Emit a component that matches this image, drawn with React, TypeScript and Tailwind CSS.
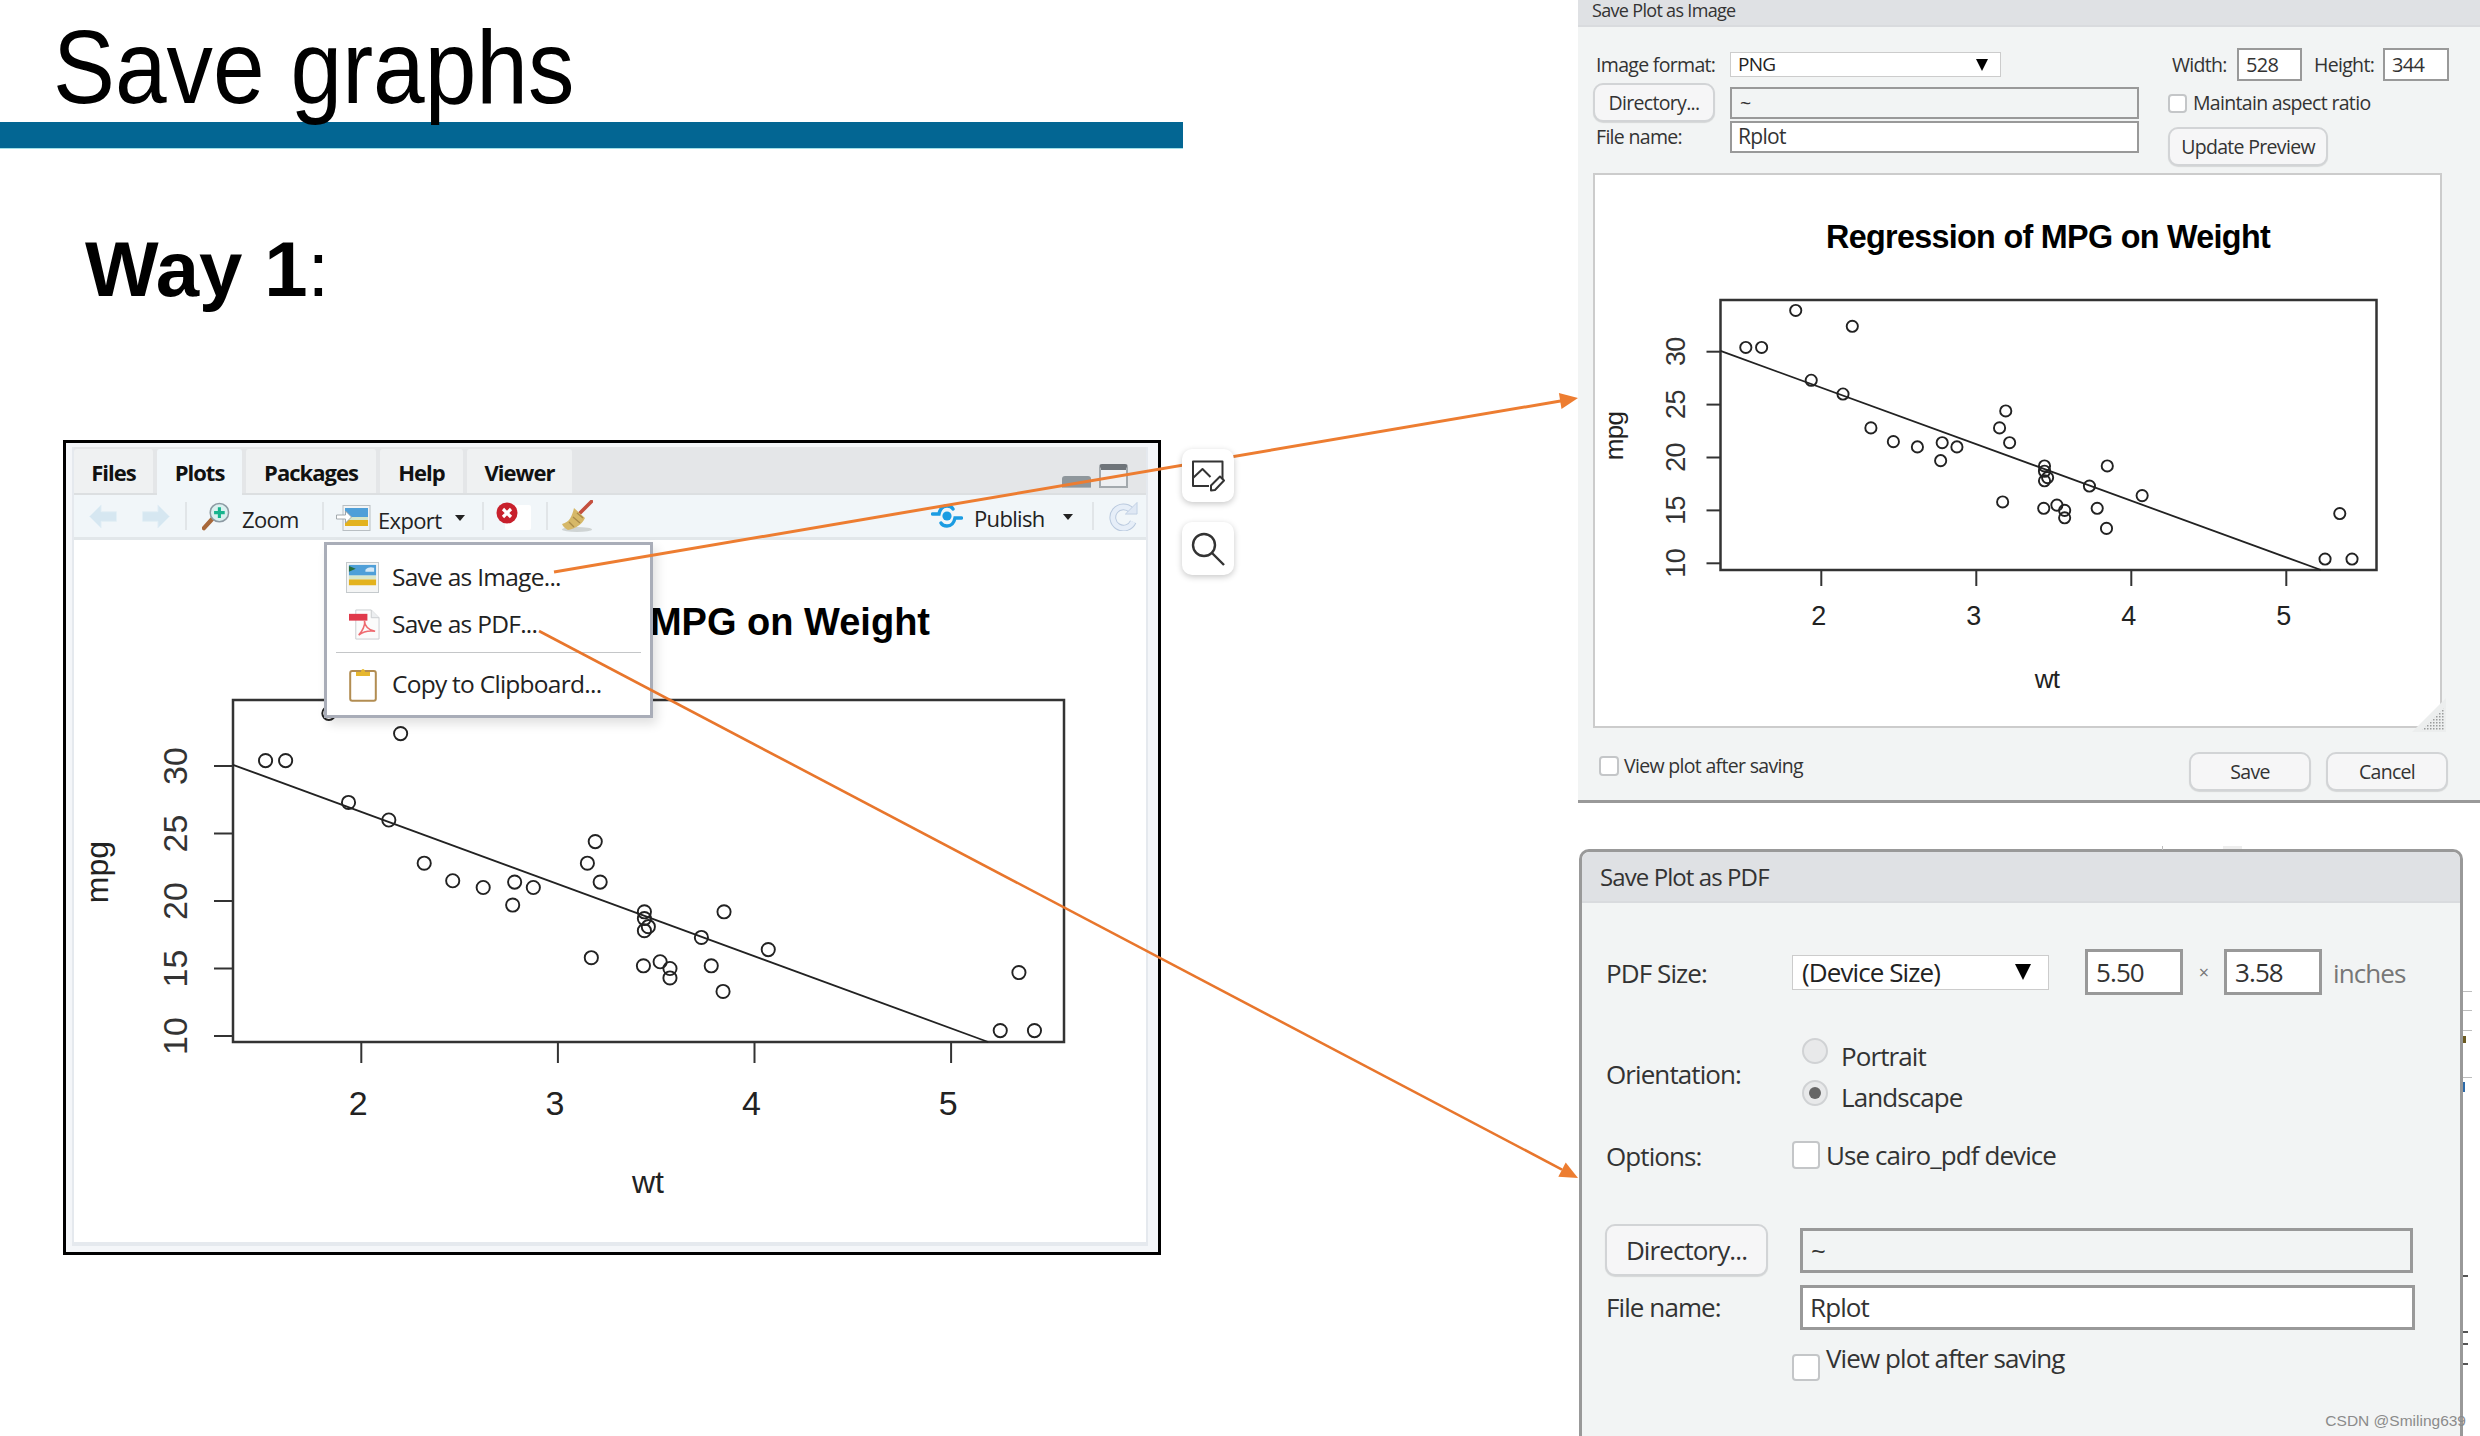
const points = [
  [2.62, 21], [2.875, 21], [2.32, 22.8], [3.215, 21.4], [3.44, 18.7], [3.46, 18.1], [3.57, 14.3], [3.19, 24.4],
  [3.15, 22.8], [3.44, 19.2], [3.44, 17.8], [4.07, 16.4], [3.73, 17.3], [3.78, 15.2], [5.25, 10.4], [5.424, 10.4],
  [5.345, 14.7], [2.2, 32.4], [1.615, 30.4], [1.835, 33.9], [2.465, 21.5], [3.52, 15.5], [3.435, 15.2], [3.84, 13.3],
  [3.845, 19.2], [1.935, 27.3], [2.14, 26], [1.513, 30.4], [3.17, 15.8], [2.77, 19.7], [3.57, 15], [2.78, 21.4],
];

type PlotProps = {
  viewBox: string;
  box: { l: number; r: number; t: number; b: number };
  x2: number;
  xUnit: number;
  y10: number;
  yUnit: number;
  tickLen: number;
  r: number;
  title: string;
  titleSize: number;
  titleEnd: number;
  titleY: number;
  tickSize: number;
  yLabelX: number;
  xLabelY: number;
  mpgX: number;
  mpgY: number;
  mpgSize: number;
  wtX: number;
  wtY: number;
  wtSize: number;
};

function Plot(p: PlotProps) {
  const xAt = (wt: number) => p.x2 + (wt - 2) * p.xUnit;
  const yAt = (mpg: number) => p.y10 - (mpg - 10) * p.yUnit;
  const fit = (wt: number) => 37.285 - 5.344 * wt;
  const wtLeft = 2 + (p.box.l - p.x2) / p.xUnit;
  const mpgBottom = 10 - (p.box.b - p.y10) / p.yUnit;
  const wtBottom = (37.285 - mpgBottom) / 5.344;

  return (
    <svg viewBox={p.viewBox} className="block w-full h-full font-['Liberation_Sans',sans-serif]">
      <text x={p.titleEnd} y={p.titleY} textAnchor="end" fontSize={p.titleSize} fontWeight="700" fill="#000">
        {p.title}
      </text>
      <rect x={p.box.l} y={p.box.t} width={p.box.r - p.box.l} height={p.box.b - p.box.t} fill="none" stroke="#333" strokeWidth="2.5" />
      <line x1={p.box.l} y1={yAt(fit(wtLeft))} x2={xAt(wtBottom)} y2={p.box.b} stroke="#222" strokeWidth="1.8" />
      {points.map(([wt, mpg], i) => (
        <circle key={i} cx={xAt(wt)} cy={yAt(mpg)} r={p.r} fill="none" stroke="#222" strokeWidth="1.9" />
      ))}
      {[2, 3, 4, 5].map((v) => (
        <g key={v}>
          <line x1={xAt(v)} y1={p.box.b} x2={xAt(v)} y2={p.box.b + p.tickLen} stroke="#333" strokeWidth="2" />
          <text x={xAt(v) - 3} y={p.xLabelY} textAnchor="middle" fontSize={p.tickSize} fill="#222">
            {v}
          </text>
        </g>
      ))}
      {[10, 15, 20, 25, 30].map((v) => (
        <g key={v}>
          <line x1={p.box.l - p.tickLen + 2} y1={yAt(v)} x2={p.box.l} y2={yAt(v)} stroke="#333" strokeWidth="2" />
          <text
            transform={`translate(${p.yLabelX} ${yAt(v)}) rotate(-90)`}
            textAnchor="middle"
            fontSize={p.tickSize}
            fill="#333"
          >
            {v}
          </text>
        </g>
      ))}
      <text transform={`translate(${p.mpgX} ${p.mpgY}) rotate(-90)`} textAnchor="middle" fontSize={p.mpgSize} fill="#222">
        mpg
      </text>
      <text x={p.wtX} y={p.wtY} textAnchor="middle" fontSize={p.wtSize} fill="#222">
        wt
      </text>
    </svg>
  );
}

function PictureIcon({ className }: { className: string }) {
  return (
    <svg viewBox="0 0 34 32" className={className}>
      <rect x="0.5" y="0.5" width="33" height="31" fill="#f4f5f5" stroke="#c4c9cc" />
      <rect x="3" y="3" width="28" height="11" fill="#4f9fd8" />
      <path d="M3 4l7 3-7 3z" fill="#256e3c" />
      <path d="M20 8c3-3 6-3 9-2v4h-9z" fill="#d4e8f6" />
      <rect x="3" y="14" width="28" height="4" fill="#d8e7cc" />
      <rect x="3" y="18" width="28" height="6" fill="#e3b21e" />
    </svg>
  );
}

function ExportIcon() {
  return (
    <svg viewBox="0 0 35 26" className="w-[35px] h-[26px]">
      <rect x="7" y="0.5" width="27" height="25" fill="#f2f4f5" stroke="#b9bfc3" />
      <rect x="9" y="3" width="23" height="9" fill="#4f9fd8" />
      <rect x="9" y="12" width="23" height="3" fill="#d7e5c7" />
      <rect x="9" y="15" width="23" height="6" fill="#e3b21e" />
      <path d="M0.5 10h9V6l6 6-6 6v-4h-9z" fill="#fff" stroke="#9aa0a5" strokeWidth="0.9" />
    </svg>
  );
}

function PdfIcon() {
  return (
    <svg viewBox="0 0 34 32" className="w-[33px] h-[31px]">
      <path d="M8 1h16l8 8v22H8z" fill="#fbfbfb" stroke="#c9ccd0" />
      <path d="M24 1v8h8" fill="#eceef0" stroke="#c9ccd0" />
      <rect x="1" y="5" width="19" height="7" fill="#e0394a" />
      <path d="M11 27c4-4 7-11 6-15 0 5 4 10 11 11-7-1-12 0-17 4z" fill="none" stroke="#ee6a70" strokeWidth="1.6" />
    </svg>
  );
}

function ClipboardIcon() {
  return (
    <svg viewBox="0 0 28 36" className="w-[28px] h-[36px]">
      <rect x="1.2" y="5" width="25.6" height="29.8" rx="2" fill="#fff" stroke="#b28d52" strokeWidth="2" />
      <path d="M7 10V6h5c0-4 4-4 4 0h5v4z" fill="#e6b72f" />
    </svg>
  );
}

function ZoomIcon() {
  return (
    <svg viewBox="0 0 30 30" className="w-[29px] h-[29px]">
      <path d="M11 17L2 27" stroke="#a8683a" strokeWidth="4.5" strokeLinecap="round" />
      <circle cx="18" cy="11" r="9.5" fill="#d9f0ef" stroke="#8d9aa3" strokeWidth="1.6" />
      <path d="M18 5.5v11M12.5 11h11" stroke="#15b48d" strokeWidth="3.2" />
    </svg>
  );
}

function ClearIcon() {
  return (
    <div className="relative w-[35px] h-[28px]">
      <div className="absolute left-[9px] top-[3px] w-[26px] h-[25px] bg-white rounded-[2px]" />
      <svg viewBox="0 0 22 22" className="absolute left-0 top-0 w-[22px] h-[22px]">
        <circle cx="11" cy="11" r="10.5" fill="#c8202c" />
        <path d="M7 7l8 8M15 7l-8 8" stroke="#fff" strokeWidth="3.2" />
      </svg>
    </div>
  );
}

function BroomIcon() {
  return (
    <svg viewBox="0 0 31 32" className="w-[31px] h-[32px]">
      <ellipse cx="15" cy="29.5" rx="15" ry="2.4" fill="#cfd4d4" />
      <path d="M17 14L29.5 1.5" stroke="#c4503f" strokeWidth="3.6" strokeLinecap="round" />
      <path d="M12 8l11 10c-3 6-8 10-17 12-2-1-5-3-6-6 8-2 10-8 12-16z" fill="#d6b868" />
      <path d="M11 17l7 6M7 22l5 5M15 13l6 5" stroke="#a98a48" strokeWidth="1.3" />
    </svg>
  );
}

function PublishIcon() {
  return (
    <svg viewBox="0 0 32 24" className="w-[32px] h-[24px]">
      <g fill="none" stroke="#1b9ce2" strokeWidth="3.4" strokeLinecap="round">
        <path d="M1.5 10H8c1-5 4-8 8-8 3 0 5 1 6 3" />
        <path d="M30.5 14H24c-1 5-4 8-8 8-3 0-5-1-6-3" />
      </g>
      <circle cx="16" cy="12" r="4.6" fill="#1b9ce2" />
    </svg>
  );
}

function RefreshIcon() {
  return (
    <svg viewBox="0 0 30 30" className="w-[29px] h-[30px]">
      <path d="M23 9a11 11 0 1 0 2 12" fill="none" stroke="#b9c9de" strokeWidth="7" />
      <path d="M23 9a11 11 0 1 0 2 12" fill="none" stroke="#e6eef8" strokeWidth="5" />
      <path d="M29 1v12H17z" fill="#dfe8f4" stroke="#b9c9de" strokeWidth="0.8" />
    </svg>
  );
}

function Arrow({ flip }: { flip?: boolean }) {
  return (
    <svg viewBox="0 0 30 26" className={flip ? "w-[30px] h-[25px] -scale-x-100" : "w-[30px] h-[25px]"}>
      <path d="M1 13L13 1v7h16v10H13v7z" fill="#d6e7f1" stroke="#e3eff6" />
    </svg>
  );
}

function Caret() {
  return <div className="w-0 h-0 border-x-[5px] border-x-transparent border-t-[6px] border-t-[#222]" />;
}

function Sep() {
  return <div className="w-[2px] h-[28px] bg-[#e1e5e8]" />;
}

function Tab({ label, width, active }: { label: string; width: string; active?: boolean }) {
  return (
    <div
      className={
        active
          ? `${width} h-[47px] -mb-[3px] flex items-center justify-center rounded-t-[3px] bg-[#f1f6f9] text-[22px] font-bold tracking-[-0.045em] text-[#111]`
          : `${width} h-[44px] pt-[3px] flex items-center justify-center rounded-t-[3px] bg-[#eff1f2] text-[22px] font-bold tracking-[-0.045em] text-[#111]`
      }
    >
      {label}
    </div>
  );
}

function PlotsPane() {
  return (
    <div className="w-[1098px] h-[815px] border-[3px] border-black bg-[#f4f6f9] pl-[6px] pt-[4px] pr-[10px] pb-[6px]">
      <div className="relative h-full flex flex-col border-x-2 border-b-4 border-[#e5e9ee] bg-white font-['Open_Sans',sans-serif]">
        <div className="h-[48px] shrink-0 flex items-end gap-[4px] pl-0 bg-[#e4e6e8] border-b-2 border-[#dcdfe1]">
          <Tab label="Files" width="w-[79px]" />
          <Tab label="Plots" width="w-[85px]" active />
          <Tab label="Packages" width="w-[130px]" />
          <Tab label="Help" width="w-[83px]" />
          <Tab label="Viewer" width="w-[105px]" />
          <div className="ml-auto mr-[18px] flex items-end gap-[8px] pb-[5px]">
            <div className="w-[29px] h-[12px] rounded-t-[3px] bg-[#8f979c] border-b border-[#aeb4b8]" />
            <div className="w-[29px] h-[24px] rounded-t-[3px] border-2 border-[#a3a9ad] border-t-[6px] border-t-[#6e7479] bg-[#eef0f2]" />
          </div>
        </div>
        <div className="h-[45px] shrink-0 flex items-center bg-[#f1f6f9] border-b-[3px] border-[#e2e7ea] text-[22px] tracking-[-0.03em] text-[#222]">
          <div className="ml-[14px]"><Arrow /></div>
          <div className="ml-[23px]"><Arrow flip /></div>
          <div className="ml-[14px]"><Sep /></div>
          <div className="ml-[15px]"><ZoomIcon /></div>
          <span className="ml-[11px] w-[58px] mt-[6px]">Zoom</span>
          <div className="ml-[22px]"><Sep /></div>
          <div className="ml-[12px] mt-[4px]"><ExportIcon /></div>
          <span className="ml-[7px] w-[62px] mt-[8px]">Export</span>
          <div className="ml-[15px] mt-[4px]"><Caret /></div>
          <div className="ml-[17px]"><Sep /></div>
          <div className="ml-[12px]"><ClearIcon /></div>
          <div className="ml-[15px]"><Sep /></div>
          <div className="ml-[14px]"><BroomIcon /></div>
          <div className="ml-auto"><PublishIcon /></div>
          <span className="ml-[11px] w-[68px] mt-[5px]">Publish</span>
          <div className="ml-[21px] mt-[2px]"><Caret /></div>
          <div className="ml-[19px]"><Sep /></div>
          <div className="ml-[15px] mr-[8px]"><RefreshIcon /></div>
        </div>
        <div className="flex-1 min-h-0">
          <Plot
            viewBox="74 540 1072 702"
            box={{ l: 233, r: 1064, t: 700, b: 1042 }}
            x2={361.3}
            xUnit={196.6}
            y10={1036}
            yUnit={13.5}
            tickLen={21}
            r={6.6}
            title="MPG on Weight"
            titleSize={38}
            titleEnd={930}
            titleY={635}
            tickSize={34}
            yLabelX={187}
            xLabelY={1115}
            mpgX={108}
            mpgY={872}
            mpgSize={32}
            wtX={648}
            wtY={1193}
            wtSize={32}
          />
        </div>
        <div className="absolute left-[250px] top-[95px] w-[329px] h-[176px] flex flex-col border-[3px] border-[#a9adb8] bg-white shadow-[4px_6px_10px_rgba(0,0,0,0.12)] text-[24.5px] tracking-[-0.03em] text-[#222]">
          <div className="h-[61px] shrink-0 flex items-center pl-[19px] pt-[4px]">
            <PictureIcon className="w-[33px] h-[31px]" />
            <span className="ml-[13px]">Save as Image...</span>
          </div>
          <div className="h-[37px] shrink-0 flex items-center pl-[21px]">
            <PdfIcon />
            <span className="ml-[11px]">Save as PDF...</span>
          </div>
          <div className="mx-[9px] mt-[9px] h-[1px] bg-[#c4c6c8]" />
          <div className="flex-1 flex items-center pl-[22px]">
            <ClipboardIcon />
            <span className="ml-[15px]">Copy to Clipboard...</span>
          </div>
        </div>
      </div>
    </div>
  );
}

function ToolButton({ children }: { children: React.ReactNode }) {
  return (
    <div className="w-[52px] h-[53px] flex items-center justify-center rounded-[10px] bg-white shadow-[0_2px_6px_rgba(0,0,0,0.22)]">
      {children}
    </div>
  );
}

function FloatingTools() {
  return (
    <div className="relative z-20 ml-[21px] mt-[9px] flex flex-col gap-[20px]">
      <ToolButton>
        <svg viewBox="0 0 34 32" className="w-[34px] h-[32px]" fill="none" stroke="#333" strokeWidth="2" strokeLinejoin="round">
          <path d="M18 26H2V1.5h29.5V19" />
          <path d="M2 18L11.5 9l8 8" />
          <path d="M20 30.5v-5l9-9 4 4-9 9.5z" />
        </svg>
      </ToolButton>
      <ToolButton>
        <svg viewBox="0 0 34 34" className="w-[34px] h-[34px]" fill="none" stroke="#333" strokeWidth="2.4">
          <circle cx="13" cy="13" r="11" />
          <path d="M21 21l12 12" />
        </svg>
      </ToolButton>
    </div>
  );
}

function Check({ className }: { className: string }) {
  return <div className={`${className} shrink-0 rounded-[4px] border-2 border-[#c4c6c8] bg-white`} />;
}

function DlgButton({ label, className }: { label: string; className: string }) {
  return (
    <div className={`${className} flex items-center justify-center rounded-[10px] border-2 border-[#d2d4d6] bg-[#f6f6f7] shadow-[0_1px_1px_rgba(0,0,0,0.12)] text-[#333]`}>
      {label}
    </div>
  );
}

function ResizeGrip() {
  return (
    <svg viewBox="0 0 34 34" className="absolute -right-[6px] -bottom-[6px] w-[34px] h-[34px]">
      <defs>
        <pattern id="grip" width="3" height="3" patternUnits="userSpaceOnUse">
          <rect width="1.5" height="1.5" fill="#9a9c9c" />
        </pattern>
      </defs>
      <path d="M34 0v34H0z" fill="#eceeee" />
      <path d="M32 10v22H10z" fill="url(#grip)" />
    </svg>
  );
}

function ImageDialog() {
  return (
    <div className="h-[803px] flex flex-col bg-[#f2f4f4] border-b-[3px] border-[#999] text-[19.5px] tracking-[-0.035em] text-[#333] font-['Open_Sans',sans-serif]">
      <div className="h-[27px] shrink-0 flex items-center pl-[14px] pb-[5px] bg-[#dfe1e4] border-b-2 border-[#d9dbde] text-[18px] leading-[18px]">Save Plot as Image</div>
      <div className="h-[146px] shrink-0 flex pl-[15px]">
        <div className="w-[546px] pt-[25px]">
          <div className="flex items-center h-[25px]">
            <span className="pl-[3px] w-[137px]">Image format:</span>
            <div className="w-[271px] h-[25px] flex items-center justify-between pl-[7px] pr-[12px] bg-white border border-[#ccc] text-[#222] text-[19px]">
              <span>PNG</span>
              <div className="w-0 h-0 border-x-[6px] border-x-transparent border-t-[12px] border-t-black" />
            </div>
          </div>
          <div className="flex items-center h-[39px] mt-[6px]">
            <DlgButton label="Directory..." className="w-[122px] h-[39px]" />
            <div className="ml-[15px] w-[409px] h-[32px] flex items-center pl-[8px] border-2 border-[#999]">~</div>
          </div>
          <div className="flex items-center h-[32px] -mt-[1px]">
            <span className="pl-[3px] w-[137px]">File name:</span>
            <div className="w-[409px] h-[32px] flex items-center pl-[6px] bg-white border-2 border-[#999] text-[21px]">Rplot</div>
          </div>
        </div>
        <div className="ml-[29px] pt-[21px]">
          <div className="flex items-center h-[33px]">
            <span className="pl-[4px] w-[69px]">Width:</span>
            <div className="w-[65px] h-[33px] flex items-center pl-[7px] bg-white border-2 border-[#999] text-[20px]">528</div>
            <span className="ml-[12px] w-[69px]">Height:</span>
            <div className="w-[66px] h-[33px] flex items-center pl-[7px] bg-white border-2 border-[#999] text-[20px]">344</div>
          </div>
          <div className="flex items-center h-[20px] mt-[12px]">
            <Check className="w-[19px] h-[19px]" />
            <span className="ml-[6px]">Maintain aspect ratio</span>
          </div>
          <DlgButton label="Update Preview" className="mt-[14px] w-[160px] h-[39px]" />
        </div>
      </div>
      <div className="relative shrink-0 ml-[15px] w-[849px] h-[555px] bg-white border-2 border-[#ccc]">
        <Plot
          viewBox="1595 175 845 551"
          box={{ l: 1720.5, r: 2376.5, t: 300, b: 570 }}
          x2={1821.3}
          xUnit={155}
          y10={563.3}
          yUnit={10.58}
          tickLen={16}
          r={5.6}
          title="Regression of MPG on Weight"
          titleSize={32.3}
          titleEnd={2270}
          titleY={248}
          tickSize={27}
          yLabelX={1685}
          xLabelY={625}
          mpgX={1623}
          mpgY={436}
          mpgSize={26}
          wtX={2047}
          wtY={688}
          wtSize={26}
        />
        <ResizeGrip />
      </div>
      <div className="flex-1 flex items-start pl-[21px] pr-[32px] pt-[24px]">
        <div className="flex items-center -mt-[1px]">
          <Check className="w-[20px] h-[20px]" />
          <span className="ml-[5px]">View plot after saving</span>
        </div>
        <DlgButton label="Save" className="ml-auto w-[122px] h-[39px]" />
        <DlgButton label="Cancel" className="ml-[15px] w-[122px] h-[39px]" />
      </div>
    </div>
  );
}

function PdfDialog() {
  return (
    <div className="relative w-[884px] h-[590px] flex flex-col rounded-t-[10px] border-x-[3px] border-t-[3px] border-[#999] bg-[#f2f4f4] text-[#333] text-[26px] tracking-[-0.035em] font-['Open_Sans',sans-serif]">
      <div className="h-[51px] shrink-0 flex items-center pl-[18px] rounded-t-[8px] bg-[#dfe1e4] border-b-2 border-[#d9dbde] text-[24px]">Save Plot as PDF</div>
      <div className="flex-1 pl-[24px]">
        <div className="flex items-center h-[46px] mt-[46px]">
          <span className="w-[186px] mt-[2px]">PDF Size:</span>
          <div className="w-[257px] h-[35px] flex items-center justify-between pl-[9px] pr-[17px] bg-white border border-[#ccc] text-[#222] text-[26px]">
            <span>(Device Size)</span>
            <div className="w-0 h-0 border-x-[8px] border-x-transparent border-t-[16px] border-t-black" />
          </div>
          <div className="ml-[36px] w-[98px] h-[46px] flex items-center pl-[8px] bg-white border-[3px] border-[#999] text-[26px]">5.50</div>
          <span className="w-[41px] text-center text-[18px] text-[#777]">×</span>
          <div className="w-[98px] h-[46px] flex items-center pl-[8px] bg-white border-[3px] border-[#999] text-[26px]">3.58</div>
          <span className="ml-[11px] mt-[2px] text-[#777]">inches</span>
        </div>
        <div className="flex items-center mt-[43px]">
          <span className="w-[187px] mt-[5px]">Orientation:</span>
          <div className="flex flex-col gap-[16px]">
            <div className="flex items-center h-[26px]">
              <div className="ml-[9px] w-[26px] h-[26px] rounded-full border-2 border-[#d0d2d4] bg-[#e8e9ea]" />
              <span className="ml-[13px] mt-[10px]">Portrait</span>
            </div>
            <div className="flex items-center h-[26px]">
              <div className="ml-[9px] w-[26px] h-[26px] flex items-center justify-center rounded-full border-2 border-[#d0d2d4] bg-[#e8e9ea]">
                <div className="w-[12px] h-[12px] rounded-full bg-[#666]" />
              </div>
              <span className="ml-[13px] mt-[9px]">Landscape</span>
            </div>
          </div>
        </div>
        <div className="flex items-center mt-[31px]">
          <span className="w-[186px]">Options:</span>
          <Check className="w-[28px] h-[28px] -mt-[3px]" />
          <span className="ml-[6px] -mt-[3px]">Use cairo_pdf device</span>
        </div>
        <div className="flex items-center mt-[48px]">
          <DlgButton label="Directory..." className="w-[163px] h-[52px] -ml-[1px]" />
          <div className="ml-[32px] w-[613px] h-[45px] flex items-center pl-[8px] border-[3px] border-[#999]">~</div>
        </div>
        <div className="flex items-center mt-[9px]">
          <span className="w-[194px]">File name:</span>
          <div className="w-[615px] h-[45px] flex items-center pl-[7px] bg-white border-[3px] border-[#999] text-[26px]">Rplot</div>
        </div>
        <div className="flex items-start mt-[15px] ml-[186px]">
          <Check className="w-[28px] h-[27px] mt-[9px]" />
          <span className="ml-[6px] -mt-[6px]">View plot after saving</span>
        </div>
      </div>
    </div>
  );
}

function Arrows() {
  return (
    <svg viewBox="0 0 2480 1436" className="absolute inset-0 z-10 w-[2480px] h-[1436px] pointer-events-none">
      <line x1="554" y1="572" x2="1562" y2="400.7" stroke="#ed7d31" strokeWidth="3" />
      <polygon points="1578,398 1561.5,408.9 1558.9,393.1" fill="#ed7d31" />
      <line x1="539" y1="631" x2="1562" y2="1169.6" stroke="#e8762c" strokeWidth="2.6" />
      <polygon points="1578,1178 1558.3,1176.7 1565.7,1162.5" fill="#ed7d31" />
      <g fill="#bdbdbd">
        <rect x="2463" y="991" width="9" height="1" />
        <rect x="2463" y="1010" width="9" height="1" />
        <rect x="2463" y="1030" width="9" height="1" />
        <rect x="2463" y="1077" width="9" height="1" />
        <rect x="2162" y="846" width="1" height="4" />
        <rect x="2223" y="846" width="19" height="3" fill="#eeeeee" />
      </g>
      <g fill="#555">
        <rect x="2463" y="1036" width="3" height="7" fill="#6b5a20" />
        <rect x="2463" y="1082" width="2" height="10" fill="#2d6aa8" />
        <rect x="2463" y="1275" width="5" height="2" />
        <rect x="2463" y="1331" width="5" height="2" />
        <rect x="2463" y="1343" width="5" height="2" />
        <rect x="2463" y="1363" width="5" height="2" />
      </g>
    </svg>
  );
}

export default function App() {
  return (
    <div className="relative w-[2480px] h-[1436px] overflow-hidden flex bg-white text-black font-['Liberation_Sans',sans-serif]">
      <div className="w-[1578px] shrink-0">
        <h1 className="h-[122px] pl-[53px] pt-[6px] text-[104px] leading-[122px]">
          <span className="inline-block origin-left scale-x-[0.893] whitespace-nowrap">Save graphs</span>
        </h1>
        <div className="w-[1183px] h-[27px] bg-[#036693] border-b border-[#9fdfe8]" />
        <p className="ml-[85px] mt-[77px] h-[86px] text-[78px] leading-[86px]">
          <span className="font-bold">Way 1</span>:
        </p>
        <div className="flex mt-[128px] ml-[63px]">
          <PlotsPane />
          <FloatingTools />
        </div>
      </div>
      <div className="w-[902px] shrink-0">
        <ImageDialog />
        <div className="mt-[46px] ml-[1px]">
          <PdfDialog />
        </div>
      </div>
      <Arrows />
      <div className="absolute right-[14px] bottom-[4px] z-10 text-[15.5px] text-[#8b8b8b] font-['Liberation_Sans',sans-serif]">CSDN @Smiling639</div>
    </div>
  );
}
